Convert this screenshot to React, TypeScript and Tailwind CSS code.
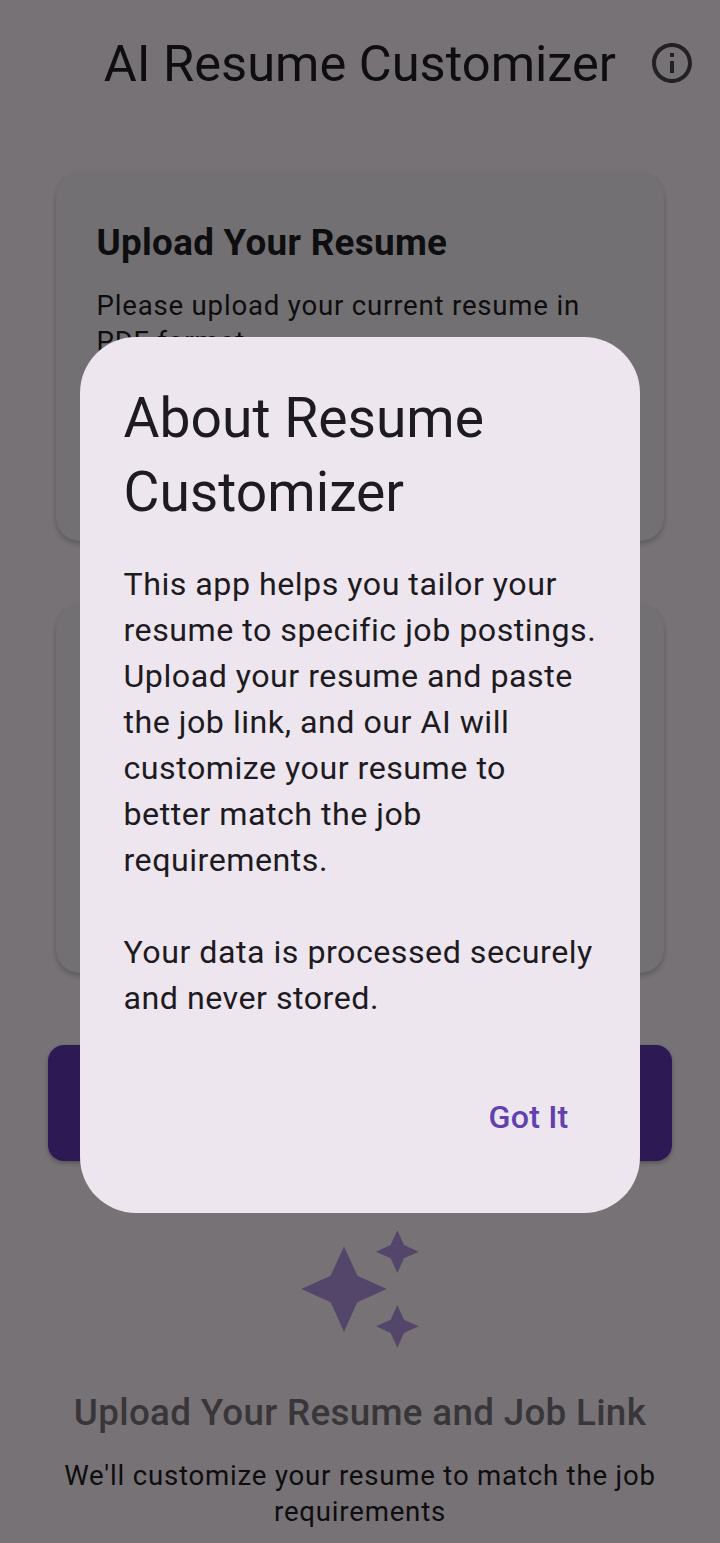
import React from "react";

function InfoIcon() {
  return (
    <svg className="block h-12 w-12 shrink-0" viewBox="0 0 24 24" fill="#222123">
      <path d="M11 7h2v2h-2zm0 4h2v6h-2zm1-9C6.480 2 2 6.480 2 12s4.480 10 10 10 10-4.480 10-10S17.520 2 12 2zm0 18c-4.410 0-8-3.590-8-8s3.590-8 8-8 8 3.590 8 8-3.590 8-8 8z" />
    </svg>
  );
}

function Sparkles() {
  return (
    <svg className="block h-32 w-32 shrink-0" viewBox="0 0 24 24" fill="#54466a">
      <path d="M19 9l1.250-2.750L23 5l-2.750-1.250L19 1l-1.250 2.750L15 5l2.750 1.250L19 9zm-7.500.5L9 4 6.500 9.500 1 12l5.500 2.500L9 20l2.500-5.500L17 12l-5.500-2.500zM19 15l-1.250 2.750L15 19l2.750 1.250L19 23l1.250-2.750L23 19l-2.750-1.250L19 15z" />
    </svg>
  );
}

function AboutDialog() {
  return (
    <div role="dialog" className="absolute left-20 top-[337px] h-[876px] w-[560px] rounded-[56px] bg-[#ede6ee] px-[43.5px] pt-11 text-[#1d1a22]">
      <h2 className="whitespace-nowrap text-[55.2px] leading-[74px]">About Resume<br />Customizer</h2>
      <p className="mt-8 whitespace-nowrap text-[32.2px] leading-[46px] tracking-[0.5px]">
        This app helps you tailor your<br />resume to specific job postings.<br />
        Upload your resume and paste<br />the job link, and our AI will<br />
        customize your resume to<br />better match the job<br />requirements.<br /><br />
        Your data is processed securely<br />and never stored.
      </p>
      <div className="mt-[76px] flex justify-end pr-7">
        <button className="text-[32.2px] font-medium leading-10 tracking-[0.2px] text-[#6240b0]">Got It</button>
      </div>
    </div>
  );
}

export default function App() {
  return (
    <main className="relative flex h-[1543px] w-[720px] flex-col overflow-hidden bg-[#777276] font-['Roboto',sans-serif]">
      <header className="flex h-[126px] items-center justify-end gap-8 pr-6">
        <h1 className="whitespace-nowrap pt-0.5 text-[50.6px] leading-[60px] text-[#0e0d10]">AI Resume Customizer</h1>
        <InfoIcon />
      </header>
      <section className="mx-14 mt-[47px] h-[368px] rounded-[24px] bg-[#727073] px-10 pt-[47px] text-[#0e0d10] shadow-[0_3px_5px_rgba(0,0,0,0.22)]">
        <h2 className="pl-[0.5px] text-[36.8px] font-bold leading-[46px] tracking-[0.3px]">Upload Your Resume</h2>
        <p className="mt-[22px] whitespace-nowrap pl-[0.5px] text-[27.6px] leading-9 tracking-[0.8px]">Please upload your current resume in<br />PDF format</p>
      </section>
      <section className="mx-14 mt-16 h-[368px] rounded-[24px] bg-[#727073] shadow-[0_3px_5px_rgba(0,0,0,0.22)]" />
      <div className="mx-12 mt-[72px] h-[116px] rounded-2xl bg-[#2d1a54] shadow-[0_2px_4px_rgba(0,0,0,0.3)]" />
      <section className="mt-16 flex flex-col items-center text-center">
        <Sparkles />
        <h2 className="mt-9 whitespace-nowrap text-[36.8px] font-medium leading-[48px] tracking-[0.3px] text-[#39363a]">Upload Your Resume and Job Link</h2>
        <p className="mt-[21px] whitespace-nowrap text-[27.6px] leading-9 tracking-[0.8px] text-[#0e0d10]">We'll customize your resume to match the job<br />requirements</p>
      </section>
      <AboutDialog />
    </main>
  );
}
